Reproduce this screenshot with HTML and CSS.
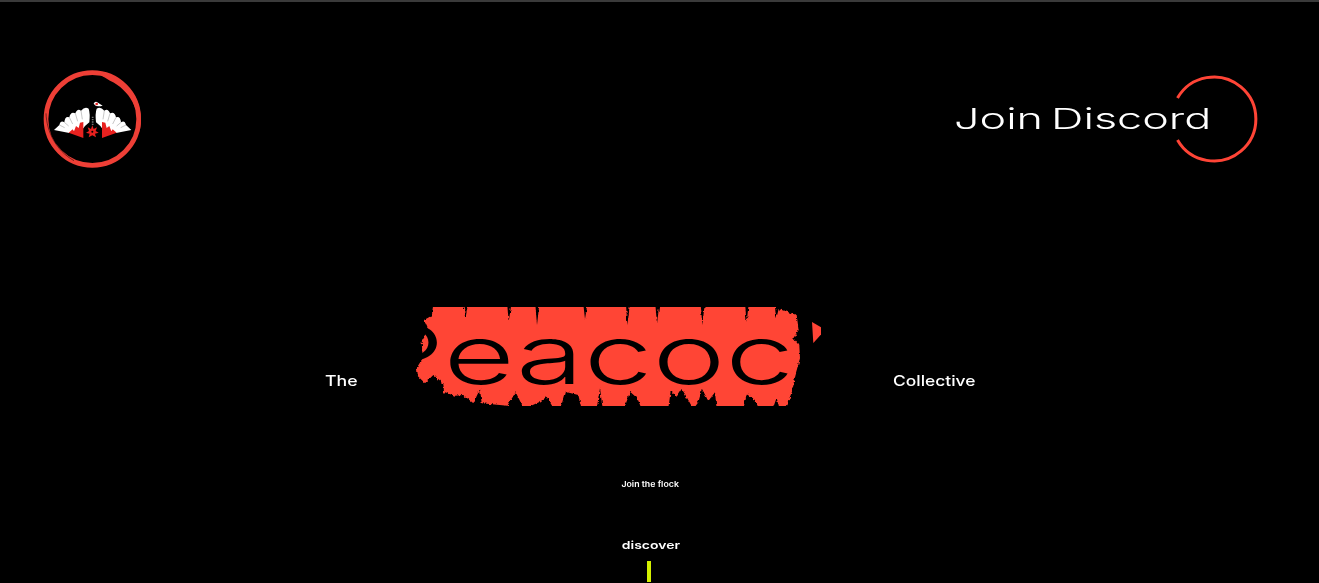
FILE: index.html
```html
<!DOCTYPE html>
<html lang="en">
<head>
<meta charset="utf-8">
<title>The Peacock Collective</title>
<link rel="stylesheet" href="styles.css">
</head>
<body>
<div class="page">
  <header class="header">
    <a class="logo" href="#" aria-label="The Peacock Collective">
      <svg class="logo-art" viewBox="0 0 375 345" width="125" height="115">
        <defs>
          <g id="fan">
            <path fill="#fff" d="M72 210 L88 195 Q92 180 103 187 Q105 167 118 172 Q122 153 136 160 Q142 144 153 152 Q165 138 176 146 Q181 160 178 187 L165 198 L160 205 L135 212 L118 219 Z"/>
            <path fill="#e8211f" d="M160 234 L116 218 L128 208 L132 214 L138 198 L146 204 L150 188 L160 186Z"/>
            <path fill="none" stroke="#555" stroke-width="1" d="M88 195 L104 203 M103 187 L116 198 M118 172 L128 192 M136 160 L143 184 M153 152 L157 178"/>
          </g>
        </defs>
        <circle cx="187" cy="177" r="139" fill="none" stroke="#ee3f36" stroke-width="14"/>
        <path d="M190 36 C270 38 333 100 333 177 C333 195 331 205 328 218 C330 150 300 90 240 62 C222 50 205 42 190 36Z" fill="#ee3f36"/>
        <path d="M48 160 C50 215 78 272 132 302" fill="none" stroke="#000" stroke-width="1.5"/>
        <use href="#fan"/>
        <use href="#fan" transform="matrix(-1 0 0 1 376 0)"/>
        <path fill="#fff" d="M191 131 Q195 122 204 128 L218 137 Q198 143 191 131Z"/>
        <circle cx="200" cy="132" r="4" fill="#e8211f"/>
        <path fill="#e8211f" d="M187 196 L191 207 L201 202 L197 213 L206 218 L195 221 L198 232 L187 226 L176 232 L179 221 L168 218 L177 213 L173 202 L183 207Z"/>
        <circle cx="187" cy="215" r="3" fill="#000"/>
        <path d="M188 170 V196" stroke="#777" stroke-width="5" stroke-dasharray="4 3"/>
      </svg>
    </a>
    <a class="discord" href="#">
      <svg class="discord-ring" viewBox="0 0 86 88" width="86" height="88">
        <path d="M4.5 23 A42 42 0 1 1 4.5 65" fill="none" stroke="#ff4436" stroke-width="3"/>
      </svg>
      <span class="discord-label">Join Discord</span>
    </a>
  </header>

  <section class="hero">
    <span class="side side-the">The</span>
    <h1 class="title">
      <svg class="brush" viewBox="0 36 1320 297" width="440" height="99" aria-hidden="true">
        <defs>
          <filter id="rough" x="-5%" y="-10%" width="110%" height="120%">
            <feTurbulence type="fractalNoise" baseFrequency="0.12 0.07" numOctaves="3" seed="7"/>
            <feDisplacementMap in="SourceGraphic" scale="10" xChannelSelector="R" yChannelSelector="G"/>
          </filter>
        </defs>
        <path filter="url(#rough)" fill="#ff4436" d="M72 75 L95 62 L100 28 L190 28 L196 72 L204 28 L322 28 L326 80 L334 28 L406 28 L411 90 L418 28 L550 28 L555 72 L562 28 L678 28 L682 90 L690 28 L766 28 L771 86 L778 28 L902 28 L907 90 L914 28 L1035 28 L1040 80 L1046 28 L1124 28 L1129 70 L1136 42 L1190 60 L1196 105 L1180 130 L1198 152 L1200 190 L1186 240 L1180 272 L1166 322 L1150 342 L1138 342 L1130 308 L1118 342 L1078 342 L1060 308 L1040 296 L1030 342 L950 342 L945 292 L925 318 L906 282 L895 322 L880 342 L855 298 L845 282 L830 305 L812 288 L805 342 L725 342 L712 310 L690 290 L672 342 L608 342 L600 280 L590 342 L545 342 L535 300 L495 290 L480 342 L462 342 L440 305 L420 320 L372 342 L347 292 L322 332 L245 325 L240 282 L220 325 L190 300 L165 302 L132 292 L130 265 L100 240 L75 265 L50 240 L48 222 L68 190 L65 140 L85 105Z"/>
      </svg>
      <span class="title-text">Peacock</span>
      <span class="brush-chip"></span>
    </h1>
    <span class="side side-collective">Collective</span>
  </section>

  <p class="flock"><span class="wide-flock">Join the flock</span></p>
  <a class="discover" href="#"><span class="wide-discover">discover</span></a>
  <div class="scroll-line"></div>
</div>
</body>
</html>
```

FILE: styles.css
```css
* { box-sizing: border-box; }
html, body { margin: 0; height: 100%; background: #000; overflow: hidden; }
body { font-family: "Inter", "Liberation Sans", sans-serif; color: #fff; }
a { color: inherit; text-decoration: none; }

.page {
  display: flex;
  flex-direction: column;
  height: 583px;
  padding-right: 18px;
  border-top: 2px solid #3a3a3a;
  overflow: hidden;
}

.header {
  display: flex;
  justify-content: space-between;
  align-items: flex-start;
  height: 305px;
  padding: 58px 42px 0 30px;
}
.logo, .logo-art { display: block; }

.discord {
  position: relative;
  display: block;
  width: 305px;
  height: 88px;
  margin-top: 15px;
}
.discord-ring { position: absolute; right: 0; top: 0; }
.discord-label {
  position: absolute;
  left: 0;
  top: 26px;
  font-size: 29px;
  line-height: 36px;
  font-weight: 350;
  word-spacing: -3px;
  white-space: nowrap;
  transform: scaleX(1.55);
  transform-origin: left center;
}

.hero {
  display: flex;
  justify-content: center;
  align-items: baseline;
  height: 100px;
}
.side {
  display: block;
  font-size: 14.5px;
  font-weight: 500;
  transform-origin: left center;
}
.side-the { width: 80px; transform: scaleX(1.22); }
.side-collective { width: 83px; margin-left: 48px; transform: scaleX(1.2); }

.title {
  position: relative;
  width: 440px;
  height: 99px;
  margin: 0;
  font-size: 82px;
  font-weight: 350;
  line-height: 100px;
  color: #000;
}
.brush { position: absolute; left: -5px; top: 0; overflow: hidden; }
.title-text {
  display: inline-block;
  position: relative;
  margin-left: -38px;
  white-space: nowrap;
  transform: translateY(-2px) scaleX(1.5);
  transform-origin: left center;
}
.brush-chip {
  position: absolute;
  left: 407px;
  top: 15px;
  width: 9px;
  height: 21px;
  background: #ff4436;
  clip-path: polygon(0 0, 100% 25%, 100% 60%, 15% 100%);
}

.flock {
  margin: 0;
  padding-top: 72px;
  text-align: center;
  font-size: 8px;
  line-height: 10px;
  font-weight: 600;
}
.wide-flock { display: inline-block; transform: scaleX(1.1); }
.discover {
  display: block;
  padding-top: 49px;
  text-align: center;
  font-size: 11px;
  line-height: 14px;
  font-weight: 600;
}
.wide-discover { display: inline-block; transform: scaleX(1.27); }
.scroll-line {
  flex: none;
  align-self: center;
  width: 4px;
  height: 21px;
  margin: 9px 3px 0 0;
  background: #d4f000;
}
```
